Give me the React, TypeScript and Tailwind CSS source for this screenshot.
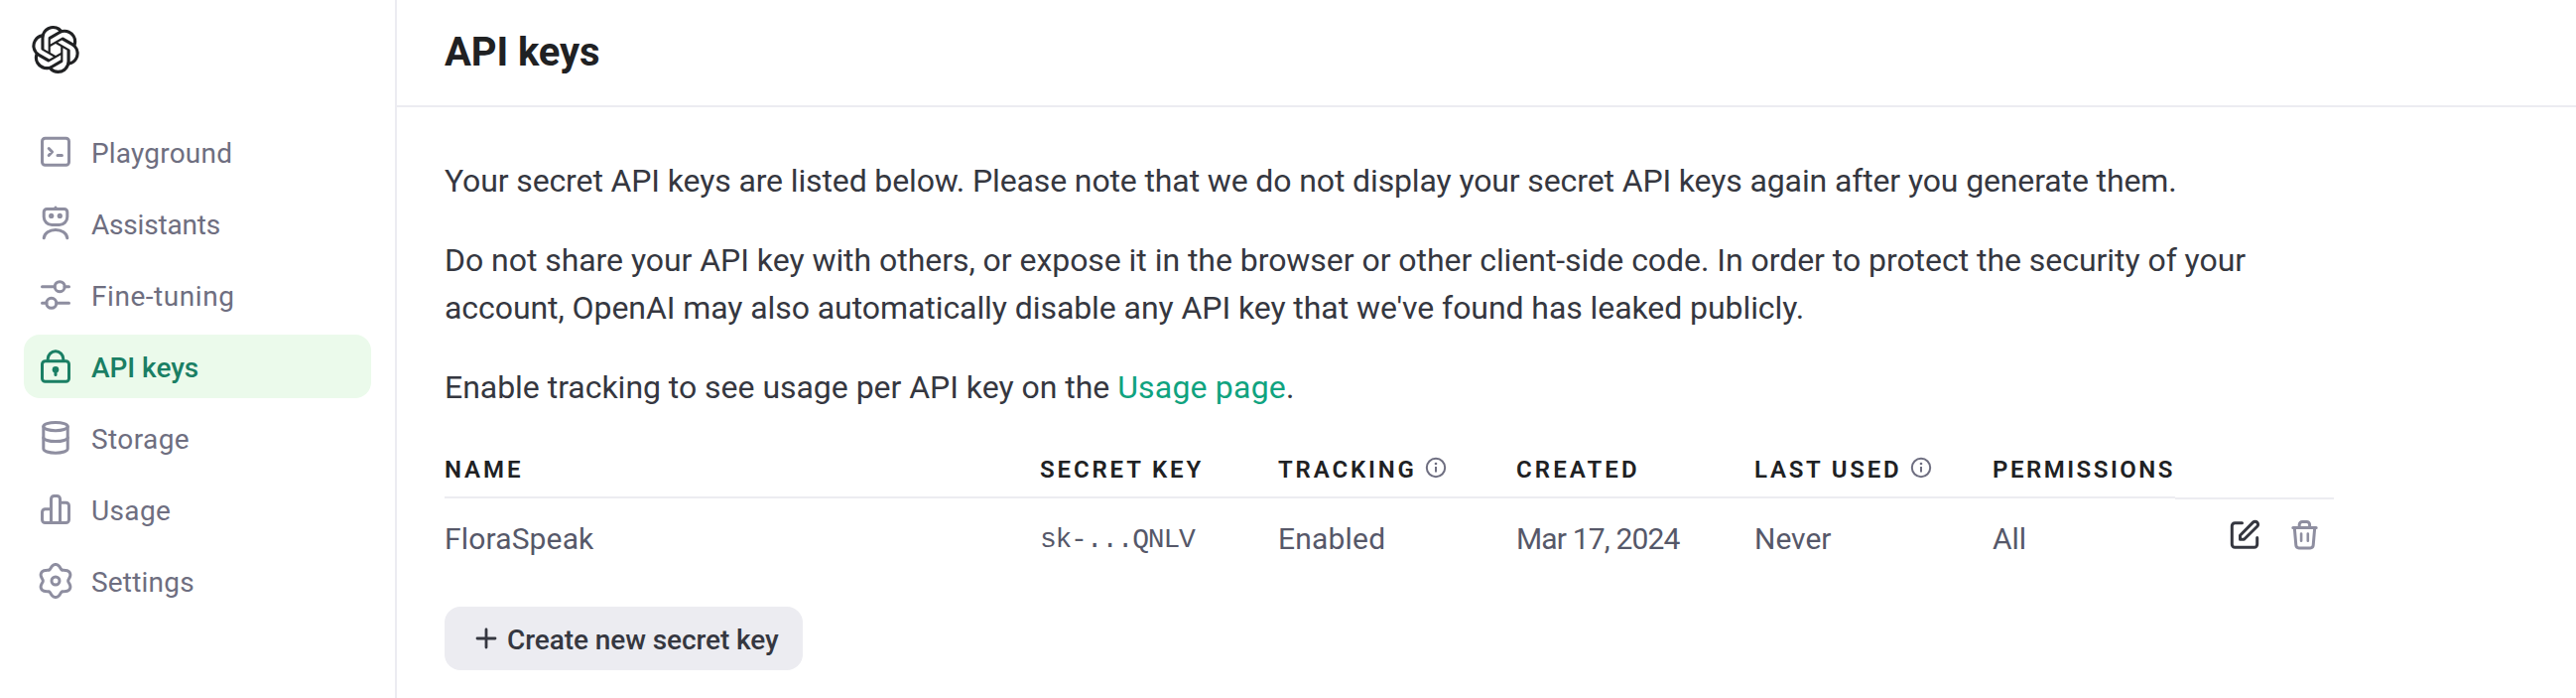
import type { ReactNode } from "react";
import { SiOpenai } from "react-icons/si";

function Icon({ children }: { children: ReactNode }) {
  return (
    <svg
      viewBox="0 0 40 40"
      className="size-10 shrink-0"
      fill="none"
      stroke="currentColor"
      strokeWidth="3"
      strokeLinecap="round"
      strokeLinejoin="round"
    >
      {children}
    </svg>
  );
}

// Six-lobed outline of the settings cog.
const cogPath =
  Array.from({ length: 120 }, (_, i) => {
    const angle = (i / 120) * Math.PI * 2;
    const r = 14.75 + 1.9 * Math.cos(6 * angle) - 0.15 * Math.cos(12 * angle);
    const x = 20 + r * Math.sin(angle);
    const y = 20 - r * Math.cos(angle);
    return `${i === 0 ? "M" : "L"}${x.toFixed(2)} ${y.toFixed(2)}`;
  }).join("") + "Z";

const nav: { label: string; text: string; icon: ReactNode; active?: boolean }[] = [
  {
    label: "Playground",
    text: "tracking-[0.2px]",
    icon: (
      <>
        <rect x="6.5" y="6.2" width="27" height="27" rx="3" />
        <path d="M13.2 16.5L16.6 20L13.2 23.5M22 23.4H26.4" />
      </>
    ),
  },
  {
    label: "Assistants",
    text: "tracking-[-0.2px]",
    icon: (
      <>
        <path d="M20 4V5.5M11.2 5.5H28.8A3 3 0 0 1 31.8 8.5V13.5A8 8 0 0 1 23.8 21.5H16.2A8 8 0 0 1 8.2 13.5V8.5A3 3 0 0 1 11.2 5.5Z" />
        <path d="M8.2 34.8C8.8 29.8 13.8 26.5 20 26.5S31.2 29.8 31.8 34.8" />
        <circle cx="15.7" cy="12.4" r="2.6" fill="currentColor" stroke="none" />
        <circle cx="24.3" cy="12.4" r="2.6" fill="currentColor" stroke="none" />
      </>
    ),
  },
  {
    label: "Fine-tuning",
    text: "tracking-[0.55px]",
    icon: (
      <>
        <path d="M6.5 11.7H19M29 11.7H33.5M6.5 28.3H11M21 28.3H33.5" />
        <circle cx="24.2" cy="11.7" r="5" />
        <circle cx="15.8" cy="28.3" r="5" />
      </>
    ),
  },
  {
    label: "API keys",
    text: "tracking-[-0.05px]",
    active: true,
    icon: (
      <>
        <rect x="6.5" y="14.8" width="27" height="20.4" rx="3" />
        <path d="M12.2 14V12.6A7.8 7.8 0 0 1 27.8 12.6V14" />
        <circle cx="20" cy="23.2" r="3.3" fill="currentColor" stroke="none" />
        <path d="M20 24V28.5" />
      </>
    ),
  },
  {
    label: "Storage",
    text: "tracking-[0.4px]",
    icon: (
      <>
        <ellipse cx="20" cy="8.6" rx="12.2" ry="4.1" />
        <path d="M7.8 8.6V31.1C7.8 33.4 13.3 35.2 20 35.2S32.2 33.4 32.2 31.1V8.6" />
        <path d="M7.8 19.8C7.8 21.9 13.3 23.6 20 23.6S32.2 21.9 32.2 19.8" />
      </>
    ),
  },
  {
    label: "Usage",
    text: "tracking-[0.35px]",
    icon: (
      <path d="M15.5 33.5V9.5A3 3 0 0 1 18.5 6.5H21.5A3 3 0 0 1 24.5 9.5V33.5M15.5 19.8H9.5A3 3 0 0 0 6.5 22.8V30.5A3 3 0 0 0 9.5 33.5H30.5A3 3 0 0 0 33.5 30.5V16.2A3 3 0 0 0 30.5 13.2H24.5" />
    ),
  },
  {
    label: "Settings",
    text: "tracking-[0.2px]",
    icon: (
      <>
        <path d={cogPath} />
        <circle cx="20" cy="20" r="4" />
      </>
    ),
  },
];

function Info() {
  return (
    <svg viewBox="0 0 24 24" className="size-6 shrink-0 text-[#6e6e80]" fill="none" stroke="currentColor" strokeWidth="2">
      <circle cx="12" cy="12" r="9.2" />
      <path d="M12 11V16.5" />
      <circle cx="12" cy="8" r="1.3" fill="currentColor" stroke="none" />
    </svg>
  );
}

const columns: { title: string; text: string; info?: string }[] = [
  { title: "NAME", text: "tracking-[2.9px]" },
  { title: "SECRET KEY", text: "tracking-[2.85px]" },
  { title: "TRACKING", text: "tracking-[2.85px]", info: "ml-[7px]" },
  { title: "CREATED", text: "tracking-[3.1px]" },
  { title: "LAST USED", text: "tracking-[2.75px]", info: "ml-[8px]" },
  { title: "PERMISSIONS", text: "tracking-[2.5px]" },
];

const grid = "grid grid-cols-[600px_240px_240px_240px_240px_184px_160px]";

export default function App() {
  return (
    <div className="flex h-[703px] w-full overflow-hidden bg-white font-['Roboto','Liberation_Sans',sans-serif]">
      <aside className="w-[400px] shrink-0 border-r-2 border-[#ececf1] px-6 pt-[26px]">
        <SiOpenai className="ml-2 size-12 text-[#202123]" />
        <nav className="mt-[47px] flex w-[350px] flex-col gap-2">
          {nav.map((item) => (
            <a
              key={item.label}
              className={`flex h-16 items-center gap-4 rounded-2xl px-3 text-[28px] leading-10 ${
                item.active ? "bg-[#ebfaeb] font-medium text-[#1a7f64]" : "text-[#6e6e80]"
              }`}
            >
              <span className={item.active ? "text-[#1a7f64]" : "text-[#8e8ea0]"}>
                <Icon>{item.icon}</Icon>
              </span>
              <span className={`pt-[3px] ${item.text}`}>{item.label}</span>
            </a>
          ))}
        </nav>
      </aside>

      <main className="min-w-0 flex-1">
        <header className="h-[108px] border-b-2 border-[#ececf1] px-12 pt-[28.5px]">
          <h1 className="text-[40px] leading-12 font-bold tracking-[-0.1px] text-[#202123]">API keys</h1>
        </header>

        <div className="w-[2000px] pt-[50px] pl-12 text-[32px] leading-12 whitespace-nowrap text-[#353740]">
          <p className="tracking-[-0.125px]">
            Your secret API keys are listed below. Please note that we do not display your secret API keys again after you
            generate them.
          </p>
          <p className="mt-8">
            <span className="block tracking-[-0.045px]">
              Do not share your API key with others, or expose it in the browser or other client-side code. In order to
              protect the security of your
            </span>
            <span className="block tracking-[-0.07px]">
              account, OpenAI may also automatically disable any API key that we've found has leaked publicly.
            </span>
          </p>
          <p className="mt-8 tracking-[-0.03px]">
            Enable tracking to see usage per API key on the{" "}
            <a className="tracking-[0.2px] text-[#10a37f]">Usage page</a>.
          </p>

          <div className={`${grid} w-[1904px] items-start`}>
            {columns.map((c) => (
              <div
                key={c.title}
                className="flex h-[88px] items-end border-b-2 border-[#ececf1] pb-[11px] text-[24px] leading-8 font-semibold text-[#202123]"
              >
                <span className={c.text}>{c.title}</span>
                {c.info && (
                  <span className={`${c.info} pb-[6px]`}>
                    <Info />
                  </span>
                )}
              </div>
            ))}
            <div className="h-[89px] border-b-2 border-[#ececf1]" />
          </div>

          <div className={`${grid} h-[108px] w-[1904px] items-start pt-5 text-[30px] leading-10 text-[#565869]`}>
            <span className="tracking-[0.15px]">FloraSpeak</span>
            <span className="pt-px font-['Liberation_Mono',monospace] text-[28px] tracking-[-1.25px]">sk-...QNLV</span>
            <span className="tracking-[0.2px]">Enabled</span>
            <span className="tracking-[-0.85px]">Mar 17, 2024</span>
            <span>Never</span>
            <span>All</span>
            <span className="-mt-[3px] flex gap-6 pl-[52px]">
              <svg
                viewBox="0 0 36 36"
                className="size-9 text-[#353740]"
                fill="none"
                stroke="currentColor"
                strokeWidth="3"
                strokeLinecap="round"
                strokeLinejoin="round"
              >
                <path d="M15.5 6.7H8.3A3 3 0 0 0 5.3 9.7V28.3A3 3 0 0 0 8.3 31.3H27.7A3 3 0 0 0 30.7 28.3V21.5" />
                <path d="M13.5 23.3V19.3L26.5 6.1A2.9 2.9 0 0 1 30.7 10.3L17.5 23.3Z" />
              </svg>
              <svg
                viewBox="0 0 36 36"
                className="size-9 text-[#8e8ea0]"
                fill="none"
                stroke="currentColor"
                strokeWidth="3"
                strokeLinecap="round"
                strokeLinejoin="round"
              >
                <path d="M6.8 11.4H30.2M13.2 11.4V8.5A3 3 0 0 1 16.2 5.5H20.6A3 3 0 0 1 23.6 8.5V11.4" />
                <path d="M8.3 11.6L9.8 29.2A3 3 0 0 0 12.8 31.9H24.2A3 3 0 0 0 27.2 29.2L28.7 11.6" />
                <path d="M15.1 17.6V24.8M21.8 17.6V24.8" strokeWidth="2.6" />
              </svg>
            </span>
          </div>

          <button className="flex h-16 w-[361px] items-center rounded-2xl bg-[#ececf1] pl-[30px] text-[28px] leading-10 font-medium text-[#353740]">
            <svg viewBox="0 0 24 24" className="size-6" fill="none" stroke="currentColor" strokeWidth="2.8" strokeLinecap="round">
              <path d="M12 3V21M3 12H21" />
            </svg>
            <span className="ml-[9px] pt-[3px] tracking-[-0.08px]">Create new secret key</span>
          </button>
        </div>
      </main>
    </div>
  );
}
